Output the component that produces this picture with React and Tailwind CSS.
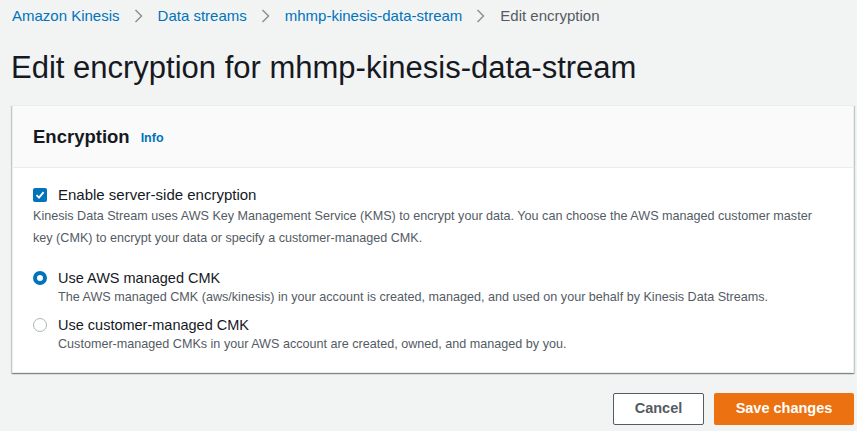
import React from "react";

function Chevron() {
  return (
    <svg width="9" height="16" viewBox="0 0 9 16" className="ml-[14px] mr-[15px]">
      <path d="M1.5 2 L7.5 8 L1.5 14" fill="none" stroke="#8d9299" strokeWidth="1.5" />
    </svg>
  );
}

export default function App() {
  return (
    <div className="w-[857px] h-[431px] bg-[#f2f3f3] font-['Liberation_Sans',Arial,sans-serif] text-[#16191f] overflow-hidden">
      <div className="pl-[12px] pr-[4px]">
        <nav className="flex items-center h-[32px] text-[15px]">
          <span className="text-[#0073bb]">Amazon Kinesis</span>
          <Chevron />
          <span className="text-[#0073bb]">Data streams</span>
          <Chevron />
          <span className="text-[#0073bb]">mhmp-kinesis-data-stream</span>
          <Chevron />
          <span className="text-[#545b64]">Edit encryption</span>
        </nav>
        <h1 className="text-[31px] leading-[36px] mt-[18px] -ml-[1px]">
          Edit encryption for mhmp-kinesis-data-stream
        </h1>
        <div className="mt-[19px] w-[842px] bg-white border border-[#eaeded] shadow-[0_1px_1px_0_rgba(0,28,36,0.3),1px_1px_1px_0_rgba(0,28,36,0.15),-1px_1px_1px_0_rgba(0,28,36,0.15)]">
          <div className="h-[62px] bg-[#fafafa] border-b border-[#eaeded] flex items-center px-[20px]">
            <span className="text-[18.5px] font-bold">Encryption</span>
            <span className="ml-[11px] text-[12.5px] font-bold text-[#0073bb] mt-[3px]">Info</span>
          </div>
          <div className="px-[20px] pt-[17px] pb-[19px]">
            <div className="flex items-center h-[20px]">
              <span className="w-[14px] h-[14px] rounded-[2px] bg-[#0073bb] flex items-center justify-center">
                <svg width="10" height="10" viewBox="0 0 10 10">
                  <path d="M1.5 5.2 L4 7.6 L8.6 2.2" fill="none" stroke="white" strokeWidth="1.8" />
                </svg>
              </span>
              <span className="ml-[11px] text-[15px]">Enable server-side encryption</span>
            </div>
            <p className="text-[12.6px] leading-[22px] text-[#545b64]">
              Kinesis Data Stream uses AWS Key Management Service (KMS) to encrypt your data. You can choose the AWS managed customer master
              <br />
              key (CMK) to encrypt your data or specify a customer-managed CMK.
            </p>
            <div className="mt-[19px] flex">
              <span className="mt-[3px] w-[14px] h-[14px] rounded-full border-[4px] border-[#0073bb] bg-white shrink-0"></span>
              <div className="ml-[11px]">
                <div className="text-[14.5px] leading-[20px]">Use AWS managed CMK</div>
                <div className="text-[12.6px] leading-[18px] text-[#545b64]">
                  The AWS managed CMK (aws/kinesis) in your account is created, managed, and used on your behalf by Kinesis Data Streams.
                </div>
              </div>
            </div>
            <div className="mt-[9px] flex">
              <span className="mt-[3px] w-[14px] h-[14px] rounded-full border border-[#aab7b8] bg-white shrink-0"></span>
              <div className="ml-[11px]">
                <div className="text-[14.5px] leading-[20px]">Use customer-managed CMK</div>
                <div className="text-[12.6px] leading-[18px] text-[#545b64]">
                  Customer-managed CMKs in your AWS account are created, owned, and managed by you.
                </div>
              </div>
            </div>
          </div>
        </div>
        <div className="flex justify-end gap-[10px] mt-[20px] w-[842px]">
          <button className="h-[32px] w-[91px] border border-[#545b64] rounded-[2px] bg-white text-[14.5px] font-bold text-[#545b64]">
            Cancel
          </button>
          <button className="h-[32px] w-[140px] rounded-[2px] bg-[#ec7211] text-[14.5px] font-bold text-white">
            Save changes
          </button>
        </div>
      </div>
    </div>
  );
}
